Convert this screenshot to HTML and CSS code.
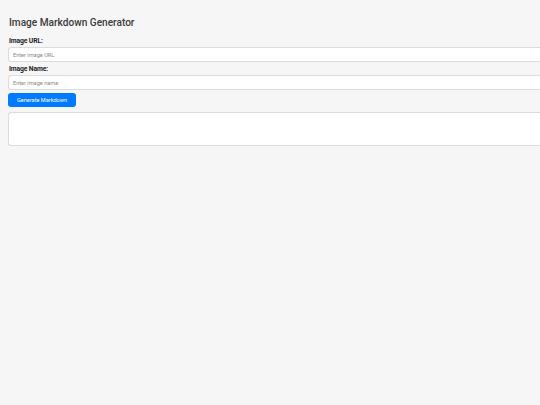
FILE: index.html
```html
<!DOCTYPE html>
<html lang="en">
<head>
<meta charset="utf-8">
<title>Image Markdown Generator</title>
<link rel="stylesheet" href="styles.css">
</head>
<body>
<main class="app">
  <h1 class="title">Image Markdown Generator</h1>
  <label class="label" for="url">Image URL:</label>
  <input class="field" id="url" type="text" placeholder="Enter image URL">
  <label class="label label-second" for="name">Image Name:</label>
  <input class="field" id="name" type="text" placeholder="Enter image name">
  <button class="btn" type="button">Generate Markdown</button>
  <div class="output"></div>
</main>
</body>
</html>
```

FILE: styles.css
```css
html, body {
  margin: 0;
  padding: 0;
  background: #f6f6f6;
  overflow: hidden;
}
body {
  font-family: Roboto, "Liberation Sans", Arial, sans-serif;
  color: #333;
}
.app {
  display: flex;
  flex-direction: column;
  align-items: flex-start;
  padding: 16px 0 0 8px;
}
.title {
  margin: 0 0 6px 1px;
  font-size: 10.1px;
  line-height: 14px;
  font-weight: 500;
  color: #3a3a3a;
}
.label {
  display: block;
  font-size: 6.8px;
  line-height: 10px;
  font-weight: 700;
  color: #222;
  margin: 0 0 1px 1px;
  letter-spacing: -0.15px;
}
.label-second {
  margin-top: 2px;
}
.field {
  box-sizing: border-box;
  width: 100%;
  height: 15px;
  margin: 0;
  padding: 0 4px;
  border: 1px solid #dcdcdc;
  border-right: none;
  border-radius: 3px 0 0 3px;
  background: #fff;
  font-family: inherit;
  font-size: 5.6px;
  color: #333;
  outline: none;
}
.field::placeholder {
  color: #8a8a8a;
}
.btn {
  margin-top: 3px;
  height: 14px;
  padding: 0 9px;
  border: none;
  border-radius: 3px;
  background: #007bff;
  color: #fff;
  font-family: inherit;
  font-size: 5.6px;
  line-height: 14px;
  cursor: pointer;
}
.output {
  box-sizing: border-box;
  margin-top: 5px;
  width: 100%;
  height: 34px;
  border: 1px solid #dcdcdc;
  border-right: none;
  border-radius: 3px 0 0 3px;
  background: #fff;
}
```
